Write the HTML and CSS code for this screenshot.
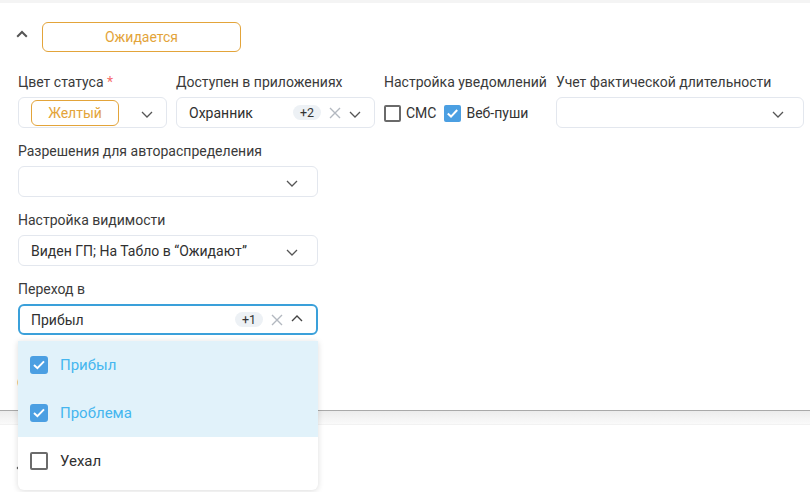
FILE: index.html
```html
<!DOCTYPE html>
<html lang="ru">
<head>
<meta charset="utf-8">
<link rel="stylesheet" href="styles.css">
</head>
<body>
<div class="topstrip"></div>
<section class="panel">
  <div class="panel-head">
    <svg class="head-chev" width="12" height="8" viewBox="0 0 12 8"><path d="M1.2 6.8 L6 2 L10.8 6.8" fill="none" stroke="#555" stroke-width="2"/></svg>
    <div class="status-badge">Ожидается</div>
  </div>

  <div class="row1">
    <div class="fld">
      <div class="lbl">Цвет статуса <span class="req">*</span></div>
      <div class="box box-color">
        <span class="color-badge">Желтый</span>
        <svg class="chev" width="12" height="7" viewBox="0 0 12 7"><path d="M1 1 L6 6 L11 1" fill="none" stroke="#555" stroke-width="1.3"/></svg>
      </div>
    </div>
    <div class="fld">
      <div class="lbl">Доступен в приложениях</div>
      <div class="box">
        <span class="val">Охранник</span>
        <span class="pill">+2</span>
        <svg class="clear" width="12" height="12" viewBox="0 0 12 12"><path d="M1 1 L11 11 M11 1 L1 11" fill="none" stroke="#b3b8c0" stroke-width="1.4"/></svg>
        <svg class="chev chev-near" width="12" height="7" viewBox="0 0 12 7"><path d="M1 1 L6 6 L11 1" fill="none" stroke="#555" stroke-width="1.3"/></svg>
      </div>
    </div>
    <div class="fld">
      <div class="lbl">Настройка уведомлений</div>
      <div class="checks">
        <span class="cb"></span><span class="cb-text">СМС</span>
        <span class="cb cb-on"><svg width="17" height="17" viewBox="0 0 17 17"><path d="M3.8 8.6 L7 11.6 L13.2 5" fill="none" stroke="#fff" stroke-width="2"/></svg></span><span class="cb-text">Веб-пуши</span>
      </div>
    </div>
    <div class="fld">
      <div class="lbl">Учет фактической длительности</div>
      <div class="box box-wide">
        <svg class="chev" width="12" height="7" viewBox="0 0 12 7"><path d="M1 1 L6 6 L11 1" fill="none" stroke="#555" stroke-width="1.3"/></svg>
      </div>
    </div>
  </div>

  <div class="fld fld-300">
    <div class="lbl">Разрешения для автораспределения</div>
    <div class="box box-wide">
      <svg class="chev" width="12" height="7" viewBox="0 0 12 7"><path d="M1 1 L6 6 L11 1" fill="none" stroke="#555" stroke-width="1.3"/></svg>
    </div>
  </div>

  <div class="fld fld-300">
    <div class="lbl">Настройка видимости</div>
    <div class="box box-wide">
      <span class="val">Виден ГП; На Табло в “Ожидают”</span>
      <svg class="chev" width="12" height="7" viewBox="0 0 12 7"><path d="M1 1 L6 6 L11 1" fill="none" stroke="#555" stroke-width="1.3"/></svg>
    </div>
  </div>

  <div class="fld fld-300 fld-open">
    <div class="lbl">Переход в</div>
    <div class="box box-focus">
      <span class="val">Прибыл</span>
      <span class="pill">+1</span>
      <svg class="clear" width="12" height="12" viewBox="0 0 12 12"><path d="M1 1 L11 11 M11 1 L1 11" fill="none" stroke="#b3b8c0" stroke-width="1.4"/></svg>
      <svg class="chev chev-near" width="12" height="7" viewBox="0 0 12 7"><path d="M1 6 L6 1 L11 6" fill="none" stroke="#444" stroke-width="1.4"/></svg>
    </div>
    <div class="dropdown">
      <div class="opt opt-on">
        <span class="cb cb-on cb-big"><svg width="18" height="18" viewBox="0 0 18 18"><path d="M4 9 L7.4 12.2 L14 5.4" fill="none" stroke="#fff" stroke-width="2"/></svg></span>
        <span class="opt-text">Прибыл</span>
      </div>
      <div class="opt opt-on">
        <span class="cb cb-on cb-big"><svg width="18" height="18" viewBox="0 0 18 18"><path d="M4 9 L7.4 12.2 L14 5.4" fill="none" stroke="#fff" stroke-width="2"/></svg></span>
        <span class="opt-text">Проблема</span>
      </div>
      <div class="opt">
        <span class="cb cb-big"></span>
        <span class="opt-text">Уехал</span>
      </div>
    </div>
  </div>

  <div class="under">С</div>
</section>
<div class="sep"></div>
<section class="panel2">
  <svg class="head-chev" width="12" height="8" viewBox="0 0 12 8"><path d="M1.2 1.2 L6 6 L10.8 1.2" fill="none" stroke="#555" stroke-width="2"/></svg>
</section>
</body>
</html>
```

FILE: styles.css
```css
* { box-sizing: border-box; }
html, body {
  margin: 0;
  padding: 0;
  background: #fff;
  font-family: Roboto, "Noto Sans", Arial, sans-serif;
  font-size: 14px;
  color: #383838;
  overflow: hidden;
}
.topstrip {
  height: 3px;
  background: #f4f4f4;
}
.panel {
  padding: 19px 6px 17px 18px;
  border-bottom: 1px solid #a9a9a9;
  position: relative;
}
.panel-head {
  display: flex;
  align-items: center;
  height: 30px;
  margin-left: -2px;
}
.head-chev {
  display: block;
  margin-right: 14px;
  margin-top: -6px;
}
.status-badge {
  width: 199px;
  height: 30px;
  border: 1px solid #e3a43a;
  border-radius: 6px;
  color: #e3a43a;
  display: flex;
  align-items: center;
  justify-content: center;
  font-size: 14px;
}
.row1 {
  display: grid;
  grid-template-columns: 149px 199px 163px 248px;
  column-gap: 9px;
  margin-top: 20px;
}
.fld {
  margin-bottom: 13px;
}
.fld-300 { width: 300px; }
.fld-open { position: relative; }
.lbl {
  line-height: 20px;
  height: 20px;
  margin-bottom: 5px;
  white-space: nowrap;
  color: #3a3a3a;
}
.req { color: #f56c6c; }
.box {
  height: 31px;
  border: 1px solid #e3e7ee;
  border-radius: 6px;
  display: flex;
  align-items: center;
  padding: 0 13px 0 12px;
  background: #fff;
}
.box-wide { padding-right: 19px; }
.box-focus {
  border: 2px solid #3aa0da;
  padding: 0 13px 0 11px;
}
.val {
  flex: 1;
  white-space: nowrap;
  color: #303030;
}
.chev {
  display: block;
  margin-left: auto;
  margin-top: 3px;
  flex: none;
}
.chev-near { margin-left: 0; }
.box-focus .chev-near { margin-top: -2px; margin-left: 8px; }
.color-badge {
  width: 88px;
  height: 26px;
  border: 1px solid #e3a43a;
  border-radius: 6px;
  color: #e3a43a;
  display: flex;
  align-items: center;
  justify-content: center;
}
.pill {
  height: 15px;
  padding: 0 7px;
  border-radius: 8px;
  background: #edf1f5;
  font-size: 12.5px;
  line-height: 15px;
  color: #333;
  margin-right: 8px;
}
.clear {
  display: block;
  margin-right: 8px;
  flex: none;
}
.box-focus .clear { margin-right: 0; }
.checks {
  height: 31px;
  display: flex;
  align-items: center;
}
.cb {
  width: 17px;
  height: 17px;
  border: 2px solid #6a6a6a;
  border-radius: 2px;
  display: inline-block;
  flex: none;
  position: relative;
  margin-top: 1px;
}
.cb svg { display: block; position: absolute; left: -2px; top: -2px; }
.cb-on {
  border-color: #4b9fe2;
  background: #4b9fe2;
}
.cb-text {
  margin-left: 5px;
  margin-right: 8px;
  color: #333;
}
.dropdown {
  position: absolute;
  left: 0;
  top: calc(100% + 6px);
  width: 300px;
  background: #fff;
  border-radius: 0 0 6px 6px;
  box-shadow: 0 1px 6px rgba(0, 0, 0, 0.14);
  padding-bottom: 5px;
  z-index: 5;
}
.opt {
  height: 48px;
  display: flex;
  align-items: center;
  padding-left: 12px;
}
.opt-on { background: #e1f2fa; }
.cb-big {
  width: 18px;
  height: 18px;
  border-radius: 3px;
  margin-top: 0;
}
.opt .cb:not(.cb-on) { border-radius: 2px; border-color: #6b6b6b; }
.opt-text {
  margin-left: 12px;
  font-size: 15px;
  color: #303030;
}
.opt-on .opt-text { color: #45b6ef; }
.under {
  margin-top: 38px;
  margin-left: -1px;
  line-height: 20px;
  color: #3a3a3a;
}
.sep {
  height: 14px;
  background: linear-gradient(#ececec, #fafafa);
  border-bottom: 1px solid #f2f2f2;
}
.panel2 {
  padding: 41px 0 40px 16px;
}
.panel2 .head-chev { margin-top: 0; }
```
